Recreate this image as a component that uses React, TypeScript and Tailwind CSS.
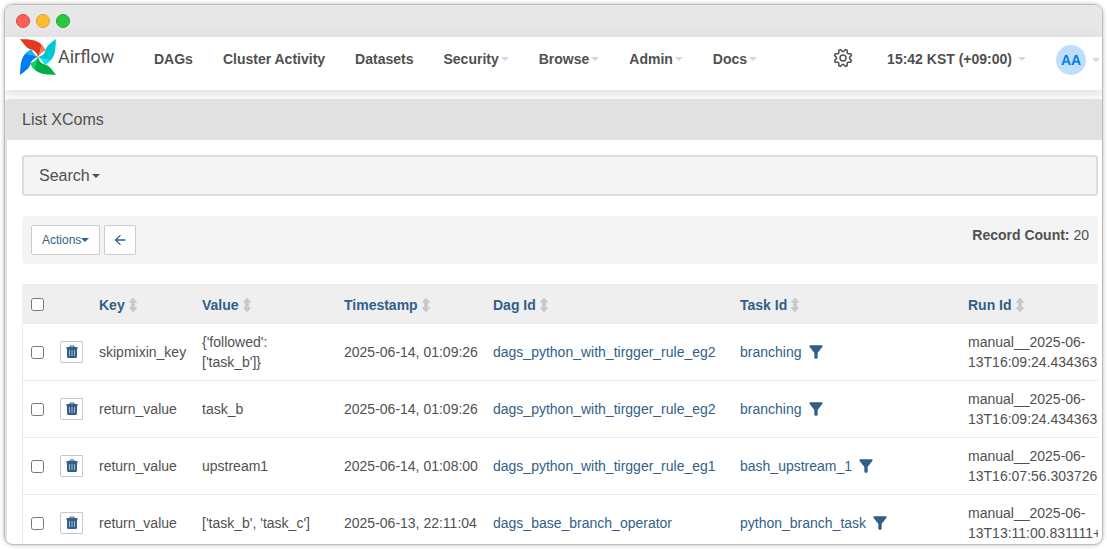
import { MdArrowBack, MdFilterAlt } from "react-icons/md";

const menu = [
  { name: "DAGs", caret: false },
  { name: "Cluster Activity", caret: false },
  { name: "Datasets", caret: false },
  { name: "Security", caret: true },
  { name: "Browse", caret: true },
  { name: "Admin", caret: true },
  { name: "Docs", caret: true },
];

const columns = ["Key", "Value", "Timestamp", "Dag Id", "Task Id", "Run Id"];

const rows = [
  {
    key: "skipmixin_key",
    value: "{'followed': ['task_b']}",
    timestamp: "2025-06-14, 01:09:26",
    dag: "dags_python_with_tirgger_rule_eg2",
    task: "branching",
    run: "manual__2025-06-13T16:09:24.434363+00:00",
  },
  {
    key: "return_value",
    value: "task_b",
    timestamp: "2025-06-14, 01:09:26",
    dag: "dags_python_with_tirgger_rule_eg2",
    task: "branching",
    run: "manual__2025-06-13T16:09:24.434363+00:00",
  },
  {
    key: "return_value",
    value: "upstream1",
    timestamp: "2025-06-14, 01:08:00",
    dag: "dags_python_with_tirgger_rule_eg1",
    task: "bash_upstream_1",
    run: "manual__2025-06-13T16:07:56.303726+00:00",
  },
  {
    key: "return_value",
    value: "['task_b', 'task_c']",
    timestamp: "2025-06-13, 22:11:04",
    dag: "dags_base_branch_operator",
    task: "python_branch_task",
    run: "manual__2025-06-13T13:11:00.831111+00:00",
  },
];

// one blade per quarter turn, starting with the top left one
const blades = [
  { angle: 0, dark: "#e43921", light: "#ff7557" },
  { angle: 90, dark: "#00c7d4", light: "#11e1ee" },
  { angle: 180, dark: "#00ad46", light: "#04d659" },
  { angle: 270, dark: "#017cee", light: "#0cb6ff" },
];

function Caret({ className }: { className: string }) {
  return (
    <svg viewBox="0 0 8 4" className={`h-1 w-2 shrink-0 ${className}`} fill="currentColor">
      <path d="M0 0h8L4 4z" />
    </svg>
  );
}

function Pinwheel() {
  return (
    <svg viewBox="0 0 36 36" className="h-9 w-9 shrink-0">
      {blades.map((blade) => (
        <g key={blade.angle} transform={`rotate(${blade.angle} 18 18)`}>
          <path d="M18 18C17 14 15 11.500 11 10.500C7 9.500 4 5.500 0 0C9 .5 16 .5 21 5C21.500 9 20 14 18 18z" fill={blade.dark} />
          <path d="M21 5C23 6.500 25 9 25.500 11.500C22 13 20 15 18 18C20 14 21.500 9 21 5z" fill={blade.light} />
        </g>
      ))}
    </svg>
  );
}

function Gear() {
  const points = Array.from({ length: 32 }, (_, i) => {
    const angle = ((i + 0.5) * Math.PI) / 16;
    const radius = i % 4 === 1 || i % 4 === 2 ? 8.8 : 6.6;
    return `${10 + radius * Math.sin(angle)},${10 - radius * Math.cos(angle)}`;
  }).join(" ");
  return (
    <svg viewBox="0 0 20 20" className="h-5 w-5" fill="none" stroke="currentColor" strokeWidth="1.5" strokeLinejoin="round">
      <polygon points={points} />
      <circle cx="10" cy="10" r="3" />
    </svg>
  );
}

function Trash() {
  return (
    <svg viewBox="0 0 12 14" className="h-3.5 w-3">
      <path d="M4 2V1h4v1" fill="none" stroke="currentColor" />
      <path d="M.5 2h11v2H.5zM1 4h10v7.500q0 1.500-1.500 1.500h-7Q1 13 1 11.500z" fill="currentColor" />
      <path d="M3.500 5v6M6 5v6M8.500 5v6" stroke="#c3d1de" strokeWidth="0.800" />
    </svg>
  );
}

function SortArrows() {
  return (
    <svg viewBox="0 0 8 14" className="h-3.5 w-2" fill="#c8c8c8">
      <path d="M4 0l4 4.500H5.500v5H8L4 14 0 9.500h2.500v-5H0z" stroke="#c8c8c8" strokeWidth="0.600" />
    </svg>
  );
}

export default function App() {
  return (
    <div className="h-screen bg-white p-[5px] font-['Liberation_Sans',Arial,sans-serif] text-sm leading-5 text-[#51504f]">
      <div className="flex h-full flex-col overflow-hidden rounded-lg bg-white shadow-[0_0_0_1px_#bdbdbd,0_0_4px_1px_#bbbbbb]">
        <div className="flex h-8 shrink-0 items-center gap-1.5 bg-[#e7e7e7] px-[11px]">
          <span className="size-3.5 rounded-full border border-[#e0443e] bg-[#ff5f57]" />
          <span className="size-3.5 rounded-full border border-[#dea123] bg-[#febc2e]" />
          <span className="size-3.5 rounded-full border border-[#1aab29] bg-[#28c840]" />
        </div>

        <nav className="relative flex h-[53px] shrink-0 items-start bg-white pl-[15px] font-bold shadow-[0_2px_12px_1px_#d8d8d8]">
          <a href="#" className="mr-[25px] flex items-center gap-0.5 pt-0.5">
            <Pinwheel />
            <span className="w-14 font-['Roboto',sans-serif] text-lg leading-5 font-normal">Airflow</span>
          </a>
          <ul className="flex pt-3">
            {menu.map((item) => (
              <li key={item.name}>
                <a href="#" className="flex items-center gap-0.5 px-[15px] whitespace-nowrap">
                  {item.name}
                  {item.caret && <Caret className="text-[#e0cfe2]" />}
                </a>
              </li>
            ))}
          </ul>
          <div className="ml-auto flex items-start">
            <a href="#" aria-label="Settings" className="mr-[34px] pt-[11px]">
              <Gear />
            </a>
            <button className="mr-[30px] flex items-center gap-1.5 pt-3 whitespace-nowrap">
              15:42 KST (+09:00)
              <Caret className="text-[#e0cfe2]" />
            </button>
            <button className="mr-0.5 flex items-center gap-1.5 pt-2">
              <span className="flex size-[30px] items-center justify-center rounded-full bg-[#bfdefb] text-[#017cee]">AA</span>
              <Caret className="text-[#e0cfe2]" />
            </button>
          </div>
        </nav>

        <main className="mt-[9px] min-h-0 flex-1 overflow-hidden rounded-tl border-l-2 border-[#e1e1e1]">
          <h1 className="h-[41px] bg-[#e1e1e1] pl-[15px] text-base leading-[41px]">List XComs</h1>
          <div className="pt-[15px] pr-1 pl-[15px]">
            <button className="flex h-[41px] w-full items-center gap-0.5 rounded-[3px] border-2 border-[#dcdcdc] bg-[#f4f4f4] pl-[15px] text-base">
              Search
              <Caret className="text-[#51504f]" />
            </button>

            <div className="mt-5 flex h-12 items-start justify-between rounded bg-[#f4f4f4] px-[9px] pt-[9px]">
              <div className="flex gap-1 text-[#315f89]">
                <button className="flex h-[30px] items-center rounded-xs border border-[#cccccc] bg-white px-2.5 text-xs">
                  Actions
                  <Caret className="" />
                </button>
                <button aria-label="Back" className="flex h-[30px] w-8 items-center justify-center rounded-xs border border-[#cccccc] bg-white">
                  <MdArrowBack size={16} />
                </button>
              </div>
              <p>
                <strong>Record Count:</strong> 20
              </p>
            </div>

            <div className="mt-5 overflow-hidden">
              <table className="w-full min-w-[1138px] table-fixed border-separate border-spacing-0 text-left">
                <colgroup>
                  <col className="w-[30px]" />
                  <col className="w-[39px]" />
                  <col className="w-[103px]" />
                  <col className="w-[142px]" />
                  <col className="w-[149px]" />
                  <col className="w-[247px]" />
                  <col className="w-[228px]" />
                  <col />
                </colgroup>
                <thead>
                  <tr className="h-10 bg-[#efefef] text-[#315f89]">
                    <th className="pl-[9px]">
                      <input type="checkbox" aria-label="Select all" className="block size-[13px]" />
                    </th>
                    <th />
                    {columns.map((column) => (
                      <th key={column} className="px-2 pt-0.5">
                        <a href="#" className="flex items-center gap-1">
                          {column}
                          <SortArrows />
                        </a>
                      </th>
                    ))}
                  </tr>
                </thead>
                <tbody>
                  {rows.map((row, i) => (
                    <tr key={i} className="h-[57px] *:border-b *:border-[#ebebeb]">
                      <td className="border-l pl-2">
                        <input type="checkbox" aria-label={`Select ${row.key}`} className="block size-[13px]" />
                      </td>
                      <td className="px-2">
                        <button aria-label="Delete" className="flex h-[22px] w-[23px] items-center justify-center rounded-l-xs border border-[#c8c8c8] text-[#315f89]">
                          <Trash />
                        </button>
                      </td>
                      <td className="px-2">{row.key}</td>
                      <td className="px-2">{row.value}</td>
                      <td className="pl-2 whitespace-nowrap">{row.timestamp}</td>
                      <td className="px-2 text-[#315f89]">
                        <a href="#">{row.dag}</a>
                      </td>
                      <td className="px-2 text-[#315f89]">
                        <span className="flex items-center gap-1">
                          <a href="#">{row.task}</a>
                          <a href="#" aria-label={`Filter by ${row.task}`}>
                            <MdFilterAlt size={20} />
                          </a>
                        </span>
                      </td>
                      <td className="px-2">{row.run}</td>
                    </tr>
                  ))}
                </tbody>
              </table>
            </div>
          </div>
        </main>
      </div>
    </div>
  );
}
